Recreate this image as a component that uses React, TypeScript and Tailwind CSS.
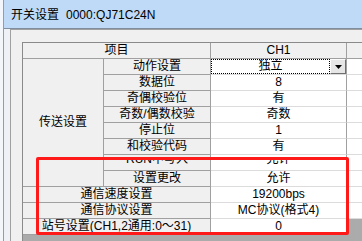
import React from "react";

type Row = { label: string; value: string; span?: boolean; clipped?: boolean; combo?: boolean };

const rows: Row[] = [
  { label: "动作设置", value: "独立", combo: true },
  { label: "数据位", value: "8" },
  { label: "奇偶校验位", value: "有" },
  { label: "奇数/偶数校验", value: "奇数" },
  { label: "停止位", value: "1" },
  { label: "和校验代码", value: "有" },
  { label: "RUN中写入", value: "允许", clipped: true },
  { label: "设置更改", value: "允许" },
  { label: "通信速度设置", value: "19200bps", span: true },
  { label: "通信协议设置", value: "MC协议(格式4)", span: true },
  { label: "站号设置(CH1,2通用:0～31)", value: "0", span: true },
];

const labelCls = "bg-[#f0f0f0] border-r border-b border-[#a0a0a0] text-center leading-[15px] overflow-hidden whitespace-nowrap";
const valueCls = "bg-white border-b border-b-[#dcdcdc] border-r border-r-[#a0a0a0] text-center leading-[15px] overflow-hidden whitespace-nowrap";

function Text({ text, clipped }: { text: string; clipped?: boolean }) {
  if (!clipped) return <>{text}</>;
  return (
    <div className="pt-[4px]">
      <div className="h-[8px] overflow-hidden">
        <div className="-mt-[7px] leading-[15px]">{text}</div>
      </div>
    </div>
  );
}

function Combo({ value }: { value: string }) {
  return (
    <div className="flex h-full">
      <div className="flex-1 border border-dotted border-black leading-[13px]">{value}</div>
      <div className="w-[16px] bg-[#e6e6e6] border-t border-l border-t-[#fcfcfc] border-l-[#fcfcfc] border-r border-b border-r-[#6f6f6f] border-b-[#6f6f6f] flex items-center justify-center">
        <svg width="7" height="4" viewBox="0 0 7 4">
          <path d="M0 0h7L3.5 4z" fill="#000" />
        </svg>
      </div>
    </div>
  );
}

export default function App() {
  return (
    <div
      className="relative w-[362px] h-[241px] overflow-hidden flex bg-[#f0f0f0] text-[12px] text-black"
      style={{ fontFamily: '"Liberation Sans","Noto Sans CJK SC",sans-serif' }}
    >
      <div className="w-[3px] bg-[#f3f6fa]" />
      <div className="flex-1 flex flex-col border-l border-[#8e9db0]">
        <div className="h-[29px] shrink-0 bg-[#bfdaf7] border-b border-[#7f8d9e] flex items-center pl-[7px] pt-[1px]">
          <span>开关设置</span>
          <span className="ml-[7px]">0000:QJ71C24N</span>
        </div>
        <div className="flex-1 flex">
          <div className="w-[6px] bg-[#eef2f7]" />
          <div className="flex-1 flex flex-col border-l border-t border-[#a0a0a0] pl-[11px] pt-[12px]">
            <div className="flex-1 bg-[#ababab] border-l border-t border-[#8a8a8a]">
              <div className="grid grid-cols-[81px_107px_136px_1fr] grid-rows-[repeat(12,16px)]">
                <div className={`${labelCls} col-span-2`}>项目</div>
                <div className={labelCls}>CH1</div>
                <div className="bg-[#f0f0f0] border-b border-[#a0a0a0]" />

                <div className={`${labelCls} row-span-8 flex items-center justify-center`}>传送设置</div>
                {rows.map((r, i) => (
                  <React.Fragment key={i}>
                    <div className={`${labelCls} ${r.span ? "col-span-2" : ""}`}>
                      <Text text={r.label} clipped={r.clipped} />
                    </div>
                    <div className={valueCls}>
                      {r.combo ? <Combo value={r.value} /> : <Text text={r.value} clipped={r.clipped} />}
                    </div>
                    {i < rows.length - 1 ? (
                      <div className="bg-white border-b border-[#dcdcdc]" />
                    ) : (
                      <div />
                    )}
                  </React.Fragment>
                ))}
              </div>
            </div>
          </div>
        </div>
      </div>

      <div className="absolute left-[36px] top-[157px] w-[313px] h-[78px] border-[3px] border-[#ff1a1a] rounded-[2px]" />
    </div>
  );
}
